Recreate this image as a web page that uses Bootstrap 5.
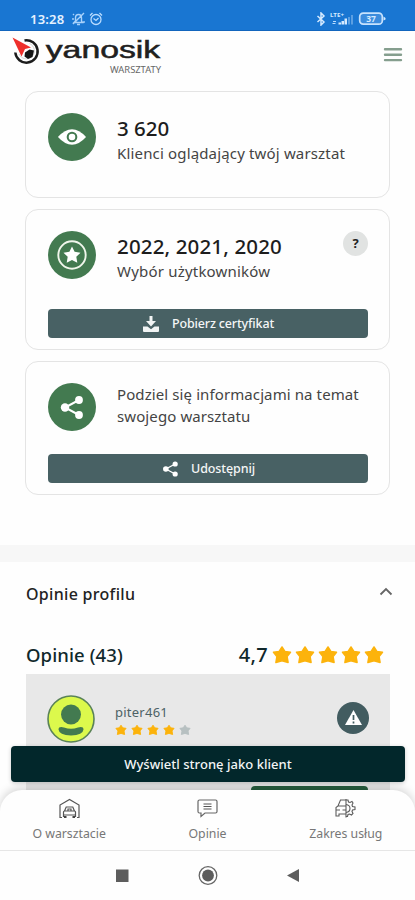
<!DOCTYPE html>
<html lang="pl">
<head>
<meta charset="utf-8">
<meta name="viewport" content="width=device-width, initial-scale=1">
<title>Yanosik Warsztaty</title>
<link href="https://cdn.jsdelivr.net/npm/bootstrap@5.3.0/dist/css/bootstrap.min.css" rel="stylesheet">
<style>
body{font-family:"Noto Sans","Open Sans",sans-serif;color:#222;background:#fefefe}
svg{display:block;flex:none}
.screen{width:415px;height:900px}
.status{height:31px;background:#1976d2;border-bottom:1px solid #1265bd;padding:8px 29px 0 30px}
.clock{font:600 13px/22px "Noto Sans",sans-serif;letter-spacing:.2px;color:#e6f2ff}
.brandbar{height:60px;padding:6px 12px 0 11px}
.stack{padding:0 25px;gap:11px}
.tile{border:1px solid #e4e4e4;border-radius:13px;padding:21px 21px 0 22px;background:#fefefe}
.t1{height:107px}.t2{height:141px;padding-top:21px}.t3{height:134px;padding-top:21px}
.disc{width:48px;height:48px;background:#437a50}
.tile-text{margin-left:21px}
.num{font-size:20.5px;line-height:26px;font-weight:500;color:#1d1d1d;padding-top:2px}
.num+.sub{margin-top:1px}
.n2{letter-spacing:.15px}
.sub{font-size:15px;line-height:22px;color:#444;white-space:nowrap}
.s1{letter-spacing:.16px}.s2{letter-spacing:.2px}.s3{letter-spacing:.1px}
.help{width:25px;height:25px;background:#e1e3e2;font:700 13px/25px "Noto Sans",sans-serif;color:#222}
.act{height:29px;background:#486164;border-radius:4px;color:#f4f6f6;font-size:12.5px;line-height:28px;font-weight:500;padding:0;border:0}
.act:hover{background:#3d5558;color:#fff}
.a1{letter-spacing:-.15px}.a2{letter-spacing:-.1px}
.t2 .act{margin-top:27px;gap:13px}.t3 .act{margin-top:23px;gap:12px}
.t2 .act svg,.t3 .act svg{margin-left:1px}
.band{height:17px;margin-top:50px;background:#f7f7f7}
.acc{height:68px;padding:0 22px 4px 26px;font-size:16px;font-weight:500;color:#222}
.acc svg{margin-top:-5px}
.o1{letter-spacing:.3px}.o2{letter-spacing:.1px}.o3{font-size:20px;letter-spacing:.3px}
.score{height:44px;padding:6px 31px 0 26px;font-size:18.5px;font-weight:500;color:#10282b}
.gold{color:#fcb30c}
.big{gap:3px}.mini{gap:4px}
.review{height:150px;margin:0 25px 0 26px;background:#e8e8e8;padding:21px 21px 0 21px}
.who{font-size:13px;line-height:17px;color:#4d6266;margin:9px 0 0 20px}
.w1{letter-spacing:.25px}
.mini{margin-top:3px}
.warn{width:32px;height:32px;background:#425c60;margin-top:7px}
.cta{left:11px;top:746px;width:394px;height:36px;background:#02272b;border-radius:4px;color:#f2f5f5;font-size:13px;line-height:35px;font-weight:500;padding:0;border:0;box-shadow:0 1px 4px #0003}
.c1{letter-spacing:.04px}
.reply{height:10px;width:117px;left:251px;top:786px;background:#265c3d;border-radius:4px}
.dock{left:0;top:790px;width:415px;height:110px}
.tabs{height:61px;background:#fefefe;border-radius:22px 22px 0 0;border-bottom:1px solid #e6e6e6;box-shadow:0 -3px 9px #00000026;padding-top:8px}
.tab-item{width:138.33px;font-size:12.3px;line-height:17px;color:#777;gap:6px}
.sys{height:49px;background:#fefefe}
</style>
<script src="https://cdn.jsdelivr.net/npm/bootstrap@5.3.0/dist/js/bootstrap.bundle.min.js"></script>
</head>
<body>
<svg width="0" height="0" class="position-absolute" aria-hidden="true">
  <symbol id="star" viewBox="0 0 20 20"><path d="M10 2 12.900 6.400l5.600.8-3.400 4.400 1 5.900-6.100-1.800-6.100 1.800 1-5.900L1.500 7.200l5.600-.8Z" fill="currentColor" stroke="currentColor" stroke-width="1.500" stroke-linejoin="round"/></symbol>
  <symbol id="share" viewBox="0 0 24 24"><path d="M19 4.500 5 12l14 7.500" fill="none" stroke="#fff" stroke-width="2"/><g fill="#fff"><circle cx="19" cy="4.500" r="3.900"/><circle cx="5" cy="12" r="4.200"/><circle cx="19" cy="19.500" r="3.900"/></g></symbol>
</svg>
<div class="screen position-relative overflow-hidden d-flex flex-column">
  <div class="status d-flex justify-content-between text-white flex-shrink-0">
    <div class="d-flex align-items-center">
      <span class="clock">13:28</span>
      <svg class="ms-2" width="13" height="14" viewBox="0 0 13 14" fill="none" stroke="#a9d2fb" stroke-width="1.400"><path d="M2 10.500h8.500L9.500 9V6c0-2-1-3.500-3-3.500S3.500 4 3.500 6v3ZM5 12.500h3M1 12 12 1M1 3l1-1M12 9v2M1 6v2"/></svg>
      <svg class="ms-1" width="14" height="14" viewBox="0 0 14 14" fill="none" stroke="#b9dcff" stroke-width="1.300"><circle cx="7" cy="7.500" r="5"/><path d="M1 3.500 3.500 1M13 3.500 10.500 1M4.500 6.500 7 8.500 9.500 6"/></svg>
    </div>
    <div class="d-flex align-items-center">
      <svg width="10" height="14" viewBox="0 0 10 14" fill="none" stroke="#d5eaff" stroke-width="1.500"><path d="m1.500 4 6.500 6-3 3V1l3 3-6.500 6"/></svg>
      <svg class="ms-1" width="24" height="14" viewBox="0 0 24 14"><text x="0" y="5" font-size="6" font-weight="700" fill="#d5eaff" textLength="14" lengthAdjust="spacingAndGlyphs">LTE+</text><path d="M3 9.500h3M2.500 11.500h3" stroke="#b9dcff"/><path d="M8.500 12.500v-2H11v2zM11.500 12.500V9H14v3.500zM14.500 12.500V6.500H17v6z" fill="#d5eaff"/><path d="M18 12.500V5h2v7.500zM21 12.500V3h2v9.500z" fill="#5c9fe2"/></svg>
      <svg class="ms-1" width="28" height="14" viewBox="0 0 28 14"><rect x="1.700" y="1.200" width="22.600" height="11" rx="3.500" fill="#3c8cdd" stroke="#c7e2fd" stroke-width="1.700"/><path d="M25.500 4.500 27.500 6v1.500l-2 1z" fill="#d5eaff"/><text x="13" y="10" text-anchor="middle" font-size="8.500" font-weight="700" fill="#d5eaff">37</text></svg>
    </div>
  </div>
  <header class="brandbar d-flex justify-content-between flex-shrink-0">
    <svg width="155" height="42" viewBox="11 37 155 42" role="img">
      <path d="M24.500 40.400A11.200 11.200 0 1 1 15.300 52.500" fill="none" stroke="#1c1c1c" stroke-width="2.500"/>
      <path d="M29.500 43.500A8 8 0 1 1 19 54" fill="none" stroke="#c9c9c9" stroke-width=".800"/>
      <path d="m25 52.500 4.500-3 4.500 1-1.500 6.500-4.500 2-3.500-2.500Z" fill="#151515"/>
      <path d="M12.500 37.500 31 47.500l-6 1.500-3.500 7.500Z" fill="#ee2f2b"/>
      <text x="0" y="0" transform="translate(45.700 58.300) scale(1.450 1)" font-family="Liberation Sans, sans-serif" font-size="24" fill="#202020" stroke="#202020" stroke-width=".500" textLength="79" lengthAdjust="spacingAndGlyphs">yanosik</text>
      <text x="110" y="72.500" font-size="8" fill="#666" textLength="51" lengthAdjust="spacingAndGlyphs">WARSZTATY</text>
    </svg>
    <svg class="mt-2" width="20" height="20" viewBox="0 0 20 20" stroke="#859e8e" stroke-width="2.400" stroke-linecap="round"><path d="M2 4.300h16M2 9.700h16M2 15.100h16"/></svg>
  </header>

  <main class="flex-shrink-0">
    <div class="stack d-flex flex-column">
      <section class="tile t1">
        <div class="d-flex">
          <span class="disc rounded-circle d-flex align-items-center justify-content-center"><svg width="30" height="18" viewBox="0 0 32 18"><path d="M1 9Q16-7.500 31 9 16 25.500 1 9Z" fill="#fff"/><circle cx="16" cy="9" r="4.600" fill="#fff" stroke="#437a50" stroke-width="2.200"/></svg></span>
          <div class="tile-text"><div class="num n1">3 620</div><div class="sub s1">Klienci oglądający twój warsztat</div></div>
        </div>
      </section>
      <section class="tile t2">
        <div class="d-flex">
          <span class="disc rounded-circle d-flex align-items-center justify-content-center"><svg width="30" height="30" viewBox="0 0 30 30"><circle cx="15" cy="15" r="13.700" fill="none" stroke="#f0f6eb" stroke-width="1.900"/><path d="m15 6.500 2.600 5.300 5.900.9-4.200 4.100 1 5.900-5.300-2.800-5.300 2.800 1-5.900-4.200-4.100 5.900-.9Z" fill="#fff"/></svg></span>
          <div class="tile-text"><div class="num n2">2022, 2021, 2020</div><div class="sub s2">Wybór użytkowników</div></div>
          <span class="help rounded-circle text-center ms-auto">?</span>
        </div>
        <button class="btn act w-100 d-flex align-items-center justify-content-center"><svg width="16" height="16" viewBox="0 0 16 16" fill="#f1f4f4"><path d="M6.500 0h3v5h3.500L8 10.500 3 5h3.500z"/><path d="M0 10.500h4.500L8 13.300l3.500-2.800H16V15q0 1-1 1H1q-1 0-1-1z"/></svg><span class="a1">Pobierz certyfikat</span></button>
      </section>
      <section class="tile t3">
        <div class="d-flex">
          <span class="disc rounded-circle d-flex align-items-center justify-content-center"><svg width="24" height="25"><use href="#share"/></svg></span>
          <div class="tile-text"><div class="sub s3">Podziel się informacjami na temat<br>swojego warsztatu</div></div>
        </div>
        <button class="btn act w-100 d-flex align-items-center justify-content-center"><svg width="17" height="16"><use href="#share"/></svg><span class="a2">Udostępnij</span></button>
      </section>
    </div>
    <div class="band"></div>
    <div class="acc d-flex align-items-center justify-content-between"><span class="o1">Opinie profilu</span><svg width="14" height="9" viewBox="0 0 14 9" fill="none" stroke="#666" stroke-width="1.800"><path d="m1.500 7.500 5.500-5.500 5.500 5.500"/></svg></div>
    <div class="score d-flex align-items-center justify-content-between">
      <span class="o2">Opinie (43)</span>
      <span class="d-flex align-items-center text-nowrap"><span class="o3">4,7</span>
        <span class="gold big d-flex ms-1"><svg width="20" height="20"><use href="#star"/></svg><svg width="20" height="20"><use href="#star"/></svg><svg width="20" height="20"><use href="#star"/></svg><svg width="20" height="20"><use href="#star"/></svg><svg width="20" height="20"><use href="#star"/></svg></span>
      </span>
    </div>
    <div class="review">
      <div class="d-flex">
        <svg width="48" height="48" viewBox="0 0 48 48"><circle cx="24" cy="24" r="23" fill="#dcf94c" stroke="#5a8357" stroke-width="1.600"/><circle cx="24" cy="19.500" r="10" fill="#437a50"/><path d="M11.500 34.500Q11.500 31 17 32.500q7 2.500 14 0 5.500-1.500 5.500 2Q36 40 24 40.500 12 40 11.500 34.500Z" fill="#437a50"/></svg>
        <div class="who"><div class="w1">piter461</div>
          <div class="gold mini d-flex"><svg width="12" height="12"><use href="#star"/></svg><svg width="12" height="12"><use href="#star"/></svg><svg width="12" height="12"><use href="#star"/></svg><svg width="12" height="12"><use href="#star"/></svg><svg width="12" height="12" color="#b7c0c1"><use href="#star"/></svg></div>
        </div>
        <span class="warn rounded-circle ms-auto d-flex justify-content-center"><svg class="mt-2" width="17" height="15" viewBox="0 0 17 15"><path d="m8.500 0 8.500 15H0Z" fill="#fff"/><path d="M8.500 5v5M8.500 11.500v2" stroke="#425c60" stroke-width="1.700"/></svg></span>
      </div>
    </div>
  </main>

  <div class="reply position-absolute"></div>
  <div class="dock position-absolute">
    <nav class="tabs d-flex">
      <div class="tab-item d-flex flex-column align-items-center"><svg width="21" height="21" viewBox="0 0 21 21" fill="none" stroke="#555" stroke-width="1.200"><path d="M3 19.500H1V7l9.500-5.500L20 7v12.500h-2"/><path d="m5.500 13 1.700-4h6.600l1.700 4M4.500 19v-5q0-1 1-1h10q1 0 1 1v5M4.500 17h12M9 13v-2h3v2"/><path d="M5 18h2.500v2H5zM13.500 18H16v2h-2.500z" fill="#444" stroke="none"/></svg><span class="n-a">O warsztacie</span></div>
      <div class="tab-item d-flex flex-column align-items-center"><svg width="21" height="21" viewBox="0 0 21 21" fill="none" stroke="#666" stroke-width="1.200"><path d="M2.500 2h16Q20 2 20 3.500v10q0 1.500-1.500 1.500H8l-4 3.500V15H2.500Q1 15 1 13.500v-10Q1 2 2.500 2Z"/><path d="M6.500 6h8M6.500 8.500h8M6.500 11h8" stroke="#555"/></svg><span class="n-b">Opinie</span></div>
      <div class="tab-item d-flex flex-column align-items-center"><svg width="21" height="21" viewBox="0 0 21 21" fill="none" stroke="#5c5c5c" stroke-width="1.100"><path d="M11 2H5.500L3 8 1 9.500V18h3v-2h7M3 8h8M1.500 12H5M7.500 12H11M11 1v18.500"/><path d="M11 2h2l.5 2 1.500.5L17 3.500 18 5l-1 2 .5 1.500 2.500.5v2.500l-2.500.5L17 13.500l1 2-1.500 1.500-2-1-1.500.5-.5 2H11M11 6.500q4 .5 4 4t-4 4"/></svg><span class="n-c">Zakres usług</span></div>
    </nav>
    <div class="sys d-flex justify-content-center align-items-center">
      <svg width="190" height="22" viewBox="0 0 190 22"><path d="M3 4.500h12.500V17H3z" fill="#5d5d5d"/><circle cx="95" cy="10.500" r="8.800" fill="none" stroke="#666" stroke-width="1.300"/><circle cx="95" cy="10.500" r="5.900" fill="#5d5d5d"/><path d="m174 10.500 12-6.500v13Z" fill="#5d5d5d"/></svg>
    </div>
  </div>
  <button class="btn cta position-absolute"><span class="c1">Wyświetl stronę jako klient</span></button>
</div>
</body>
</html>
